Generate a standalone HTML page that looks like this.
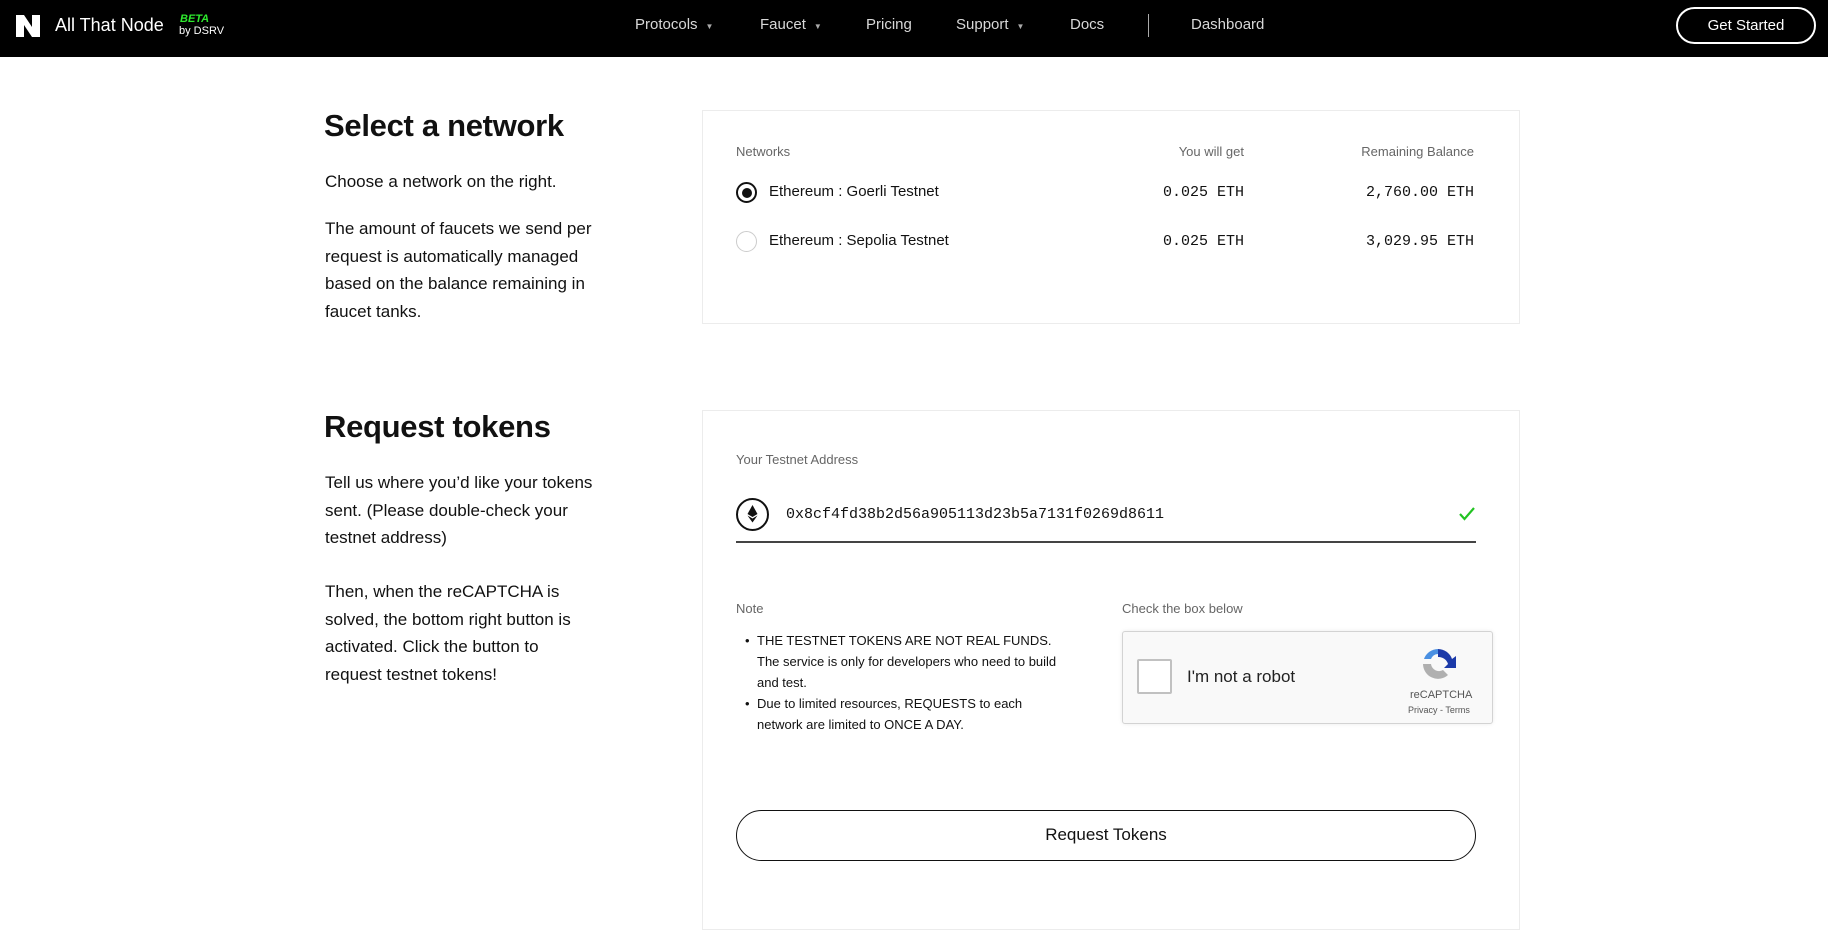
<!DOCTYPE html>
<html><head><meta charset="utf-8"><style>
*{margin:0;padding:0;box-sizing:border-box}
body{width:1828px;height:884px;overflow:hidden;background:#fff;font-family:"Liberation Sans",sans-serif;color:#111;position:relative}
.a{position:absolute;white-space:nowrap}
.nav{position:absolute;left:0;top:0;width:1828px;height:57px;background:#000;color:#fff}
.ni{position:absolute;top:16px;font-size:15px;color:#d8d8d8}
.ni small{font-size:8px;margin-left:8px;color:#aaa}
.card{position:absolute;border:1px solid #ececec;background:#fff}
.mono{font-family:"Liberation Mono",monospace}
.lbl{font-size:13px;color:#666}
p.t{font-size:17px;line-height:27.5px;color:#111}
</style></head><body>
<div class="nav">
 <svg class="a" style="left:16px;top:15px" width="24" height="22" viewBox="0 0 24 22"><path d="M0 0h8l8 12V0h8v22h-8L8 10v12H0z" fill="#fff"/></svg>
 <div class="a" style="left:55px;top:15px;font-size:18px;color:#fff">All That Node</div>
 <div class="a" style="left:180px;top:13px;font-size:11px;color:#2ee82e;font-style:italic;font-weight:bold">BETA</div>
 <div class="a" style="left:179px;top:25px;font-size:11px;color:#fff">by DSRV</div>
 <div class="ni" style="left:635px">Protocols<small>▼</small></div>
 <div class="ni" style="left:760px">Faucet<small>▼</small></div>
 <div class="ni" style="left:866px">Pricing</div>
 <div class="ni" style="left:956px">Support<small>▼</small></div>
 <div class="ni" style="left:1070px">Docs</div>
 <div class="a" style="left:1148px;top:14px;width:1px;height:23px;background:#aaa"></div>
 <div class="ni" style="left:1191px">Dashboard</div>
 <div class="a" style="left:1676px;top:7px;width:140px;height:37px;border:2px solid #fff;border-radius:19px;text-align:center;line-height:33px;font-size:15px;color:#fff">Get Started</div>
</div>

<div class="a" style="left:324px;top:108px;font-size:31px;font-weight:bold;color:#111;letter-spacing:-0.3px">Select a network</div>
<div class="a" style="left:325px;top:168px"><p class="t">Choose a network on the right.</p></div>
<div class="a" style="left:325px;top:215px"><p class="t">The amount of faucets we send per<br>request is automatically managed<br>based on the balance remaining in<br>faucet tanks.</p></div>

<div class="card" style="left:702px;top:110px;width:818px;height:214px">
 <div class="a lbl" style="left:33px;top:33px">Networks</div>
 <div class="a lbl" style="right:275px;top:33px">You will get</div>
 <div class="a lbl" style="right:45px;top:33px">Remaining Balance</div>
 <div class="a" style="left:33px;top:71px;width:21px;height:21px;border:2px solid #111;border-radius:50%"><div style="margin:3.5px;width:10px;height:10px;border-radius:50%;background:#111"></div></div>
 <div class="a" style="left:66px;top:72px;font-size:15px">Ethereum : Goerli Testnet</div>
 <div class="a mono" style="right:275px;top:73px;font-size:15px">0.025 ETH</div>
 <div class="a mono" style="right:45px;top:73px;font-size:15px">2,760.00 ETH</div>
 <div class="a" style="left:33px;top:120px;width:21px;height:21px;border:1px solid #ccc;border-radius:50%"></div>
 <div class="a" style="left:66px;top:121px;font-size:15px">Ethereum : Sepolia Testnet</div>
 <div class="a mono" style="right:275px;top:122px;font-size:15px">0.025 ETH</div>
 <div class="a mono" style="right:45px;top:122px;font-size:15px">3,029.95 ETH</div>
</div>

<div class="a" style="left:324px;top:409px;font-size:31px;font-weight:bold;color:#111;letter-spacing:-0.3px">Request tokens</div>
<div class="a" style="left:325px;top:469px"><p class="t">Tell us where you’d like your tokens<br>sent. (Please double-check your<br>testnet address)</p></div>
<div class="a" style="left:325px;top:578px"><p class="t">Then, when the reCAPTCHA is<br>solved, the bottom right button is<br>activated. Click the button to<br>request testnet tokens!</p></div>

<div class="card" style="left:702px;top:410px;width:818px;height:520px">
 <div class="a lbl" style="left:33px;top:41px">Your Testnet Address</div>
 <div class="a" style="left:33px;top:87px;width:33px;height:33px;border:2px solid #111;border-radius:50%">
  <svg width="29" height="29" viewBox="0 0 29 29"><path d="M14.5 5l-5 9 5 3 5-3z" fill="#111"/><path d="M14.5 18.5l-5-3 5 7 5-7z" fill="#111"/></svg></div>
 <div class="a mono" style="left:83px;top:95px;font-size:15px">0x8cf4fd38b2d56a905113d23b5a7131f0269d8611</div>
 <svg class="a" style="left:756px;top:96px" width="16" height="14" viewBox="0 0 16 14"><path d="M1 7l4.5 5L15 1" stroke="#22c322" stroke-width="2.2" fill="none"/></svg>
 <div class="a" style="left:33px;top:130px;width:740px;height:1.5px;background:#444"></div>
 <div class="a lbl" style="left:33px;top:190px">Note</div>
 <div class="a lbl" style="left:419px;top:190px">Check the box below</div>
 <div class="a" style="left:42px;top:219px;font-size:13px;line-height:21px;color:#111;white-space:normal;width:325px">
  <div style="padding-left:12px;position:relative"><span style="position:absolute;left:0">•</span>THE TESTNET TOKENS ARE NOT REAL FUNDS. The service is only for developers who need to build and test.</div>
  <div style="padding-left:12px;position:relative"><span style="position:absolute;left:0">•</span>Due to limited resources, REQUESTS to each network are limited to ONCE A DAY.</div>
 </div>
 <div class="a" style="left:419px;top:220px;width:371px;height:93px;background:#f9f9f9;border:1px solid #d3d3d3;border-radius:3px;box-shadow:0 0 4px rgba(0,0,0,.08)">
  <div class="a" style="left:14px;top:27px;width:35px;height:35px;border:2px solid #c1c1c1;border-radius:2px;background:#fff"></div>
  <div class="a" style="left:64px;top:35px;font-size:17px;color:#222">I'm not a robot</div>
  <svg class="a" style="left:296px;top:13px" width="38" height="38" viewBox="0 0 38 38"><path d="M19 4a15 15 0 0 1 14 10l4-3v12H25l4-4a10 10 0 0 0-10-7z" fill="#1c3aa9"/><path d="M19 4a15 15 0 0 0-14 10h7a8 8 0 0 1 7-5z" fill="#4a90e2"/><path d="M4 19a15 15 0 0 0 25 11l-5-5a8 8 0 0 1-12-6H4z" fill="#b0b0b0"/></svg>
  <div class="a" style="left:287px;top:57px;font-size:11px;color:#555">reCAPTCHA</div>
  <div class="a" style="left:285px;top:73px;font-size:9px;color:#555">Privacy - Terms</div>
 </div>
 <div class="a" style="left:33px;top:399px;width:740px;height:51px;border:1.5px solid #111;border-radius:26px;text-align:center;line-height:48px;font-size:17px">Request Tokens</div>
</div>
</body></html>
